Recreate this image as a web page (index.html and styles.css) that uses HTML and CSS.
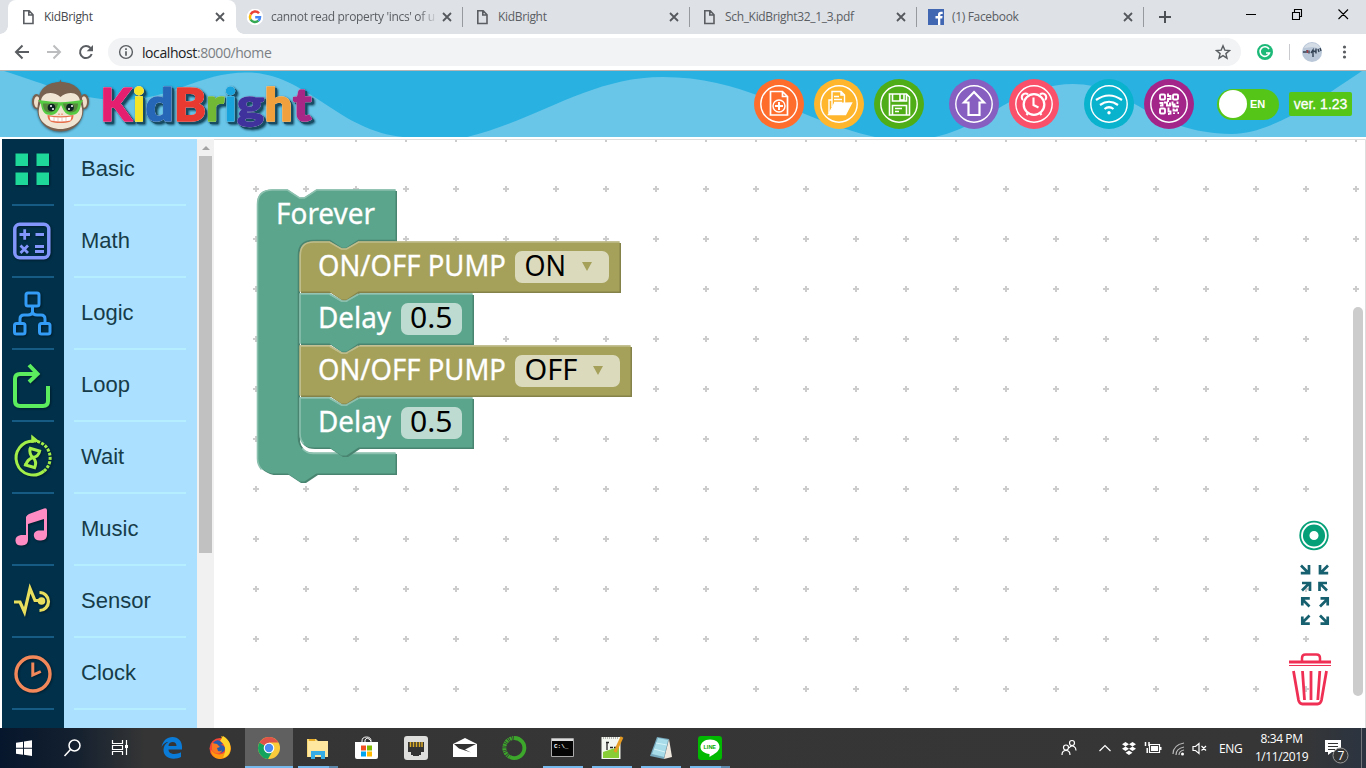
FILE: index.html
```html
<!DOCTYPE html>
<html lang="en">
<head>
<meta charset="utf-8">
<title>KidBright</title>
<link rel="stylesheet" href="styles.css">
</head>
<body>
<svg class="defs" width="0" height="0">
  <symbol id="doc" viewBox="0 0 16 16"><path d="M3.8 1.8h5.4l3.8 4v8.7H3.8z M8.8 2v4h4" fill="none" stroke="#5a5d61" stroke-width="1.6"/></symbol>
  <symbol id="x" viewBox="0 0 16 16"><path d="M4 4l8 8M12 4l-8 8" stroke="#55585c" stroke-width="1.8"/></symbol>
</svg>

<div class="tabs">
  <div class="tab active"><svg class="fav"><use href="#doc"/></svg><span class="title">KidBright</span><svg class="fav"><use href="#x"/></svg></div>
  <div class="tab"><svg class="fav" viewBox="0 0 16 16"><circle cx="8" cy="8" r="8.3" fill="#fff"/><g fill="none" stroke-width="2.5"><path d="M12 4.3A5 5 0 0 0 3.6 5.5" stroke="#ea4335"/><path d="M3.6 5.5a5 5 0 0 0 0 5" stroke="#fbbc05"/><path d="M3.6 10.5a5 5 0 0 0 7.8 1.2" stroke="#34a853"/><path d="M11.4 11.7A5 5 0 0 0 13 8.2H8.2" stroke="#4285f4"/></g></svg><span class="title fade">cannot read property 'incs' of u</span><svg class="fav"><use href="#x"/></svg></div>
  <div class="tab line"><svg class="fav"><use href="#doc"/></svg><span class="title">KidBright</span><svg class="fav"><use href="#x"/></svg></div>
  <div class="tab line"><svg class="fav"><use href="#doc"/></svg><span class="title">Sch_KidBright32_1_3.pdf</span><svg class="fav"><use href="#x"/></svg></div>
  <div class="tab line"><svg class="fav" viewBox="0 0 16 16"><path d="M0 0h16v16H0z" fill="#4267b2"/><path d="M10 16V9.5H7.5V7H10V5.5Q10 2.8 13 2.8h1.7V5h-1.2q-1.2 0-1.2 1.1V7h2.3l-.4 2.5h-1.9V16z" fill="#fff"/></svg><span class="title">(1) Facebook</span><svg class="fav"><use href="#x"/></svg></div>
  <div class="newtab"><svg width="44" height="34"><path d="M16 17h12M22 11v12" stroke="#4d5054" stroke-width="2"/></svg></div>
  <svg class="wincontrols" width="138" height="34" viewBox="1228 0 138 34"><path d="M1246 14.500h10M1292.500 12.500h7v7h-7zM1294.500 12v-2.500h7v7H1300M1338.500 9.500l9.500 9.500M1348 9.500l-9.500 9.500" fill="none" stroke="#000" stroke-width="1.1"/></svg>
</div>

<div class="toolbar">
  <svg class="nav" width="108" height="36" viewBox="0 34 108 36"><g fill="none" stroke-width="2"><path d="M29 52H16.500M22.500 45.500L16 52l6.500 6.500" stroke="#5a5d61"/><path d="M47 52h12.500M53.500 45.500L60 52l-6.500 6.500" stroke="#bbbdbf"/><path d="M90.500 48A6 6 0 1 0 91.700 54" stroke="#5a5d61"/></g><path d="M93 45v6.300h-6.300z" fill="#5a5d61"/></svg>
  <div class="omnibox">
    <svg width="16" height="16"><circle cx="8" cy="8" r="6.400" fill="none" stroke="#5a5d61" stroke-width="1.400"/><path d="M8 4.200v1.700M8 7.200v4.500" stroke="#5a5d61" stroke-width="1.700"/></svg>
    <span class="url">localhost<i>:8000/home</i></span>
    <svg class="star" width="16" height="16"><path d="M8 1.800l1.800 4.300 4.700.4-3.600 3.100 1.100 4.600L8 11.700l-4 2.500 1.100-4.600-3.600-3.100 4.700-.4z" fill="none" stroke="#5a5d61" stroke-width="1.400"/></svg>
  </div>
  <svg width="125" height="36" viewBox="1241 34 125 36"><circle cx="1265" cy="52" r="8" fill="#1cb978"/><path d="M1269 49a4.800 4.800 0 1 0 .5 4h-3.500" fill="none" stroke="#fff" stroke-width="1.600"/><path d="M1289.500 44v16" stroke="#c8cacd"/><circle cx="1312" cy="52" r="10" fill="#b9c7d8"/><path d="M1304 48q3-5 8-5 6 0 9 6l-8-2z" fill="#d4dce6"/><path d="M1303 52h3M1307 50v3M1309 50.500v3M1311 53l2-3v7M1313.500 51l3 1M1316 48.500v5M1318 49l1 3M1320 48l1 3" stroke="#344255" stroke-width="1.400" fill="none"/><path d="M1307.500 50v3" stroke="#a13f44" stroke-width="1.500"/><g fill="#5a5d61"><circle cx="1344.500" cy="47" r="1.600"/><circle cx="1344.500" cy="52" r="1.600"/><circle cx="1344.500" cy="57" r="1.600"/></g></svg>
</div>

<header class="header">
  <svg class="waves" width="1366" height="66"><path d="M4 0C46 13 78 28 115 29C170 31 196 1.500 247 1.500C306 1.500 338 60 403 66H0V0zM467 66C540 48 590 6 663 6C748 6 800 50 875 66zM935 66C985 56 1016 13 1073 13C1130 13 1150 62 1232 63C1272 63 1320 28 1362 0h4v66z" fill="#69c6e9"/></svg>
  <svg class="logo" width="300" height="66" viewBox="26 71 300 66">
    <g class="monkey">
      <path d="M59 83l1.500-3.500 1 3" fill="#79614f"/>
      <ellipse cx="36.500" cy="101.500" rx="4.500" ry="7.500" fill="#79614f"/><ellipse cx="84.500" cy="101.500" rx="4.500" ry="7.500" fill="#79614f"/>
      <ellipse cx="37" cy="102" rx="3" ry="5.800" fill="#f0dfca"/><ellipse cx="84" cy="102" rx="3" ry="5.800" fill="#f0dfca"/>
      <path d="M39 99C39 88 49 82 60.500 82S82 88 82 99C88 119 75 131.500 60.500 131.500S33 119 39 99z" fill="#79614f"/>
      <path d="M60.500 97C54 91 41 91 41 102C33 120 48 129 60.500 129S88 120 80 102C80 91 67 91 60.500 97z" fill="#f0e4d3"/>
      <path d="M38 100l12 1.500q10 1.500 21 0L83 100l-2 4c-1 8-4 11-10 11-6 0-8-6-10-10-2 4-4 10-10 10-6 0-9-3-10-11z" fill="#55ca43"/>
      <path d="M43 103.500h15c-1 5-4 9-8 9-5 0-7-4-7-9zM63 103.500h15c0 5-2 9-7 9-4 0-7-4-8-9z" fill="#56883e"/>
      <circle cx="51.500" cy="107.500" r="3.800" fill="#102323"/><circle cx="70" cy="107.500" r="3.800" fill="#102323"/><path d="M51 105v2M53 108v2M69 108v2M72 105v2" stroke="#fff" stroke-width="1.500"/>
      <path d="M47.500 115q13 2.500 26 0c0 7-5 8-13 8s-13-1-13-8z" fill="#e66f4c"/><path d="M49.500 116.500q11 2 22 0l-1 4q-10 2-20 0z" fill="#fff"/><path d="M54 117v4M58 117v4M62 117v4M66 117v4" stroke="#dbb3a5" stroke-width=".7"/><path d="M59 113.500v1.500M62 113.500v1.500" stroke="#e66f4c"/>
    </g>
    <g class="wordmark">
      <text x="100.500" y="121" textLength="31.500" lengthAdjust="spacingAndGlyphs" color="#e41f70">K</text>
      <text x="133" y="121" textLength="12" lengthAdjust="spacingAndGlyphs" color="#f4e529">i</text>
      <text x="145.500" y="121" textLength="28" lengthAdjust="spacingAndGlyphs" color="#2667b8">d</text>
      <text x="174" y="121" textLength="32" lengthAdjust="spacingAndGlyphs" color="#e83a31">B</text>
      <text x="206" y="121" textLength="18" lengthAdjust="spacingAndGlyphs" color="#72b936">r</text>
      <text x="224.500" y="121" textLength="12" lengthAdjust="spacingAndGlyphs" color="#1aa4dd">i</text>
      <text class="g" x="237" y="119" textLength="27" lengthAdjust="spacingAndGlyphs" color="#40329d">g</text>
      <text x="264.500" y="121" textLength="28" lengthAdjust="spacingAndGlyphs" color="#f0a13d">h</text>
      <text x="293" y="121" textLength="18.500" lengthAdjust="spacingAndGlyphs" color="#a72787">t</text>
    </g>
  </svg>
  <div class="actions">
    <div class="btn orange"><svg viewBox="0 0 50 50"><circle cx="25" cy="25" r="18.200"/><path d="M16.500 12.500h12l5 5v18.500h-17zM28.500 12.500v5h5" stroke-width="1.700"/><circle cx="25" cy="27" r="6"/><path d="M21 27h8M25 23v8" stroke-width="2"/></svg></div>
    <div class="btn yellow"><svg viewBox="0 0 50 50"><circle cx="25" cy="25" r="18.200"/><path d="M15 34V21h3M18 28V12.500h9l3.500 3.500v9M27 12.500V16h4M20 17.500h5M20 20.500h8M20 23.500h8"/><path d="M14.500 35.500l6-11 17-.500-6 11.500z" fill="#fff"/></svg></div>
    <div class="btn green"><svg viewBox="0 0 50 50"><circle cx="25" cy="25" r="18.200"/><path d="M15.500 15h17l3 3v18h-20zM18.500 15v7h14v-7M26 15v6h4v-6M18.500 36v-9.500h14V36M21 29.500h7M21 32.500h4" stroke-width="1.600"/></svg></div>
    <div class="btn purple gap"><svg viewBox="0 0 50 50"><circle cx="25" cy="25" r="18.200"/><path d="M25 13L35 23.500h-4.500V36h-11V23.500H15z" stroke-width="2.200"/></svg></div>
    <div class="btn red"><svg viewBox="0 0 50 50"><circle cx="25" cy="25" r="18.200"/><circle cx="25" cy="25.500" r="10.300" stroke-width="2.300"/><path d="M14 21a3.500 3.500 0 1 1 5-5.500M36 21a3.500 3.500 0 1 0-5-5.500M24.500 18.500V26l5 2.500M19 34l-1.500 2M31 34l1.500 2" stroke-width="2.100"/></svg></div>
    <div class="btn teal gap"><svg viewBox="0 0 50 50"><circle cx="25" cy="25" r="18.200"/><path d="M12 21q13-9 26 0M16 26q9-6.500 18 0M20.500 30q4.500-3.500 9 0" stroke-width="2.200"/><circle cx="25" cy="33.800" r="1.700" fill="#fff" stroke="none"/></svg></div>
    <div class="btn magenta"><svg viewBox="0 0 50 50"><circle cx="25" cy="25" r="18.200"/><g stroke-width="1.900"><rect x="16" y="15.500" width="5" height="5" rx="1"/><rect x="29" y="15.500" width="5" height="5" rx="1"/><rect x="16" y="29.500" width="5" height="5" rx="1"/><path d="M24 14.500v2.500h2.500v3h-2.500v3M15.500 24h3v2.500h-2.500M20 23.500h3v3h3V23.500M28.500 22.500v3h3M33.500 22.500v2.500M28.500 27.500h6.500M24.500 28.500v4h2v3M29.500 29.500v2h3.500v-2M30 35v-1.500M24 35h1.500M33.500 34h1.500"/></g></svg></div>
    <div class="toggle"><span class="knob"></span>EN</div>
    <div class="version">ver. 1.23</div>
  </div>
</header>

<main class="main">
  <nav class="side">
    <div class="cat"><div class="icon"><svg viewBox="0 0 62 72"><path d="M13.500 20.500H26V33H13.500zM34.500 20.500H47V33H34.500zM13.500 39.500H26V52H13.500zM34.500 39.500H47V52H34.500z" fill="#1dd899"/></svg></div><div class="label">Basic</div></div>
    <div class="cat"><div class="icon"><svg viewBox="0 0 62 72" stroke="#8296fc" stroke-width="3.500"><rect x="12.800" y="19.300" width="34" height="33.500" rx="5"/><path d="M17.500 29.500h10.500M22.700 24.300v10.500M33.500 29.500h8.500M18.500 40.500l7.500 7.500M26 40.500l-7.500 7.500M33 41.500h9M33 46.500h9" stroke-width="2.800"/></svg></div><div class="label">Math</div></div>
    <div class="cat"><div class="icon"><svg viewBox="0 0 62 72" stroke="#339cf6" stroke-width="3"><rect x="24" y="16" width="13" height="13" rx="2"/><rect x="12.500" y="46.500" width="10.500" height="10.500" rx="2"/><rect x="37.500" y="46.500" width="10.500" height="10.500" rx="2"/><path d="M30.500 29v9M18 46v-4q0-4 4-4h4q4 0 4.500-3q.5 3 4.500 3h4q4 0 4 4v4"/></svg></div><div class="label">Logic</div></div>
    <div class="cat"><div class="icon"><svg viewBox="0 0 62 72" stroke="#5ced5e" stroke-width="4"><path d="M35 25H18q-5 0-5 5v22q0 5 5 5h23q5 0 5-5V37M27 16l8.500 9-8.500 8"/></svg></div><div class="label">Loop</div></div>
    <div class="cat"><div class="icon"><svg viewBox="0 0 62 72" stroke="#a3ef49" stroke-width="3"><path d="M32 20A17 17 0 1 0 42 50"/><path d="M42 50A17 17 0 0 0 33 20" stroke-dasharray="3 1.300"/><path d="M30 15l6 5-6 1z" fill="#a3ef49" stroke-width="1.500"/><path d="M27 27l12 3.500M22 43.500l12 3.500M28 27.500q-1 6 3 9q-6 2-7 7.500M37.500 30.500q-1 5-6.500 6q4 4 2 9.500" stroke-width="3"/></svg></div><div class="label">Wait</div></div>
    <div class="cat"><div class="icon"><svg viewBox="0 0 62 72"><path d="M24 24q1-2 3-3l15-5.500q3-1 3 2V42q0 5-6 5.500t-7-4 4-6h6V26l-16 5v16q0 5-6 5.500t-6.500-4.500 5.500-6h5z" fill="#ff8dc3"/></svg></div><div class="label">Music</div></div>
    <div class="cat"><div class="icon"><svg viewBox="0 0 62 72" stroke="#e9df5e" stroke-width="3.200"><path d="M12 37h6l4.500 10L28 23.500l5 12h6M37.500 27.500a9 9 0 1 1 0 18"/><circle cx="39.500" cy="36" r="2.200" fill="#e9df5e"/></svg></div><div class="label">Sensor</div></div>
    <div class="cat"><div class="icon"><svg viewBox="0 0 62 72" stroke="#f3895b" stroke-width="3.400"><circle cx="31" cy="37" r="17"/><path d="M30.800 25.500V38l8-3.500" stroke-width="3"/></svg></div><div class="label">Clock</div></div>
    <div class="cat"><div class="icon"></div><div class="label"></div></div>
  </nav>
  <div class="scroll"><span class="up"></span><div class="thumb"></div></div>

  <svg class="workspace" width="1152" height="589" viewBox="214 139 1152 589">
    <defs>
      <pattern id="grid" x="231" y="164" width="50" height="50" patternUnits="userSpaceOnUse"><path d="M22 25h6M25 22v6" stroke="#ccc" stroke-width="2"/></pattern>
      <path id="forever" d="M257.500 205Q257.500 190 272.500 190H288l12 8h5l12-8H396v51H359l-12 8h-5l-12-8H314Q299 241 299 256V438Q299 453 314 453H396v21H317l-12 8h-5l-12-8H272.500Q257.500 470 257.500 459z"/>
      <path id="pump1" d="M300 256Q300 242 314 242H330l12 7h5l12-7H620v50H359l-12 8h-5l-12-8H300z"/>
      <path id="delay1" d="M300 294H330l12 7h5l12-7H473v50H359l-12 8h-5l-12-8H300z"/>
      <path id="pump2" d="M300 346H330l12 7h5l12-7H631v50H359l-12 8h-5l-12-8H300z"/>
      <path id="delay2" d="M300 398H330l12 7h5l12-7H473v50H359l-12 8h-5l-12-8H314Q300 448 300 434z"/>
    </defs>
    <path d="M214 139h1152v589H214z" fill="url(#grid)"/>
    <path d="M214 139.500h1151.500V728" fill="none" stroke="#ddd"/>
    <g transform="translate(-0.500 -0.500)">
      <g class="teal-dark"><use href="#forever" x="1.500" y="1.500"/></g>
      <use class="teal-base" href="#forever"/>
      <path class="dark-line" d="M330 241l12 8h5l12-8H396M330 241H314Q299 241 299 256V438Q299 444 303 449"/>
      <path class="teal-light" d="M262 470Q258 465 258 459V205Q258 190.500 273 190.500H288l12 8h5l12-8H396M303 449Q307 454 314 454H396"/>

      <g class="teal-dark"><use href="#delay2" x="1.500" y="1.500"/></g><use class="teal-base" href="#delay2"/>
      <path class="teal-light" d="M304 444Q300.500 440 300.500 434V398.500H330l12 7h5l12-7H473"/>
      <g class="olive-dark"><use href="#pump2" x="1.500" y="1.500"/></g><use class="olive-base" href="#pump2"/>
      <path class="olive-light" d="M300.700 396V346.500H330l12 7h5l12-7H631"/>
      <path class="teal-light" d="M330 398.500l12 7h5l12-7"/>
      <g class="teal-dark"><use href="#delay1" x="1.500" y="1.500"/></g><use class="teal-base" href="#delay1"/>
      <path class="teal-light" d="M300.500 344V294.500H330l12 7h5l12-7H473"/>
      <path class="olive-light" d="M330 346.500l12 7h5l12-7"/>
      <g class="olive-dark"><use href="#pump1" x="1.500" y="1.500"/></g><use class="olive-base" href="#pump1"/>
      <path class="olive-light" d="M300.700 292V256Q300.700 242.500 314 242.500H330l12 7h5l12-7H620"/>
      <path class="teal-light" d="M330 294.500l12 7h5l12-7"/>
    </g>

    <rect x="515" y="251" width="94" height="32" rx="7" fill="#dbdabd"/><rect x="515" y="355" width="105" height="32" rx="7" fill="#dbdabd"/>
    <rect x="401" y="303" width="61" height="32" rx="7" fill="#bddbd1"/><rect x="401" y="407" width="61" height="32" rx="7" fill="#bddbd1"/>
    <path d="M582 262h10l-5 9zM593 366h10l-5 9z" fill="#a5a15b"/>
    <g class="blocktext">
      <text x="276" y="224" textLength="99" lengthAdjust="spacingAndGlyphs">Forever</text>
      <text x="318" y="276" textLength="188" lengthAdjust="spacingAndGlyphs">ON/OFF PUMP</text><text x="318" y="380" textLength="188" lengthAdjust="spacingAndGlyphs">ON/OFF PUMP</text>
      <text x="318" y="328" textLength="73" lengthAdjust="spacingAndGlyphs">Delay</text><text x="318" y="432" textLength="73" lengthAdjust="spacingAndGlyphs">Delay</text>
      <g class="value"><text x="524.500" y="276" textLength="41.500" lengthAdjust="spacingAndGlyphs">ON</text><text x="524.500" y="380" textLength="53" lengthAdjust="spacingAndGlyphs">OFF</text><text x="410" y="328" textLength="42.500" lengthAdjust="spacingAndGlyphs">0.5</text><text x="410" y="432" textLength="42.500" lengthAdjust="spacingAndGlyphs">0.5</text></g>
    </g>

    <circle cx="1314" cy="535.500" r="13.800" fill="#fff" stroke="#05a078" stroke-width="1.800"/><circle cx="1314" cy="535.500" r="7.800" fill="#fff" stroke="#05a078" stroke-width="6.500"/>
    <g fill="none" stroke="#17606f" stroke-width="2.700" transform="translate(0 -0.500)"><path d="M1301 566l7 7M1309 565.500v8.200h-8.200M1328 566l-7 7M1320 565.500v8.200h8.200M1302 591l7-7M1302 583.500h8v8M1327 591l-7-7M1327 583.500h-7.500v8M1309.500 607l-7-7M1302.300 606v-7.200h7.500M1320 607l7-7M1320.500 598.800h7.200v7.200M1309.500 616l-7 7M1302.300 617v7.200h7.500M1320 616l7 7M1320.500 624.200h7.200V617"/></g>
    <g fill="none" stroke="#ef3054"><path d="M1302 661v-3q0-3.500 3.500-3.500h11q3.500 0 3.500 3.500v3" stroke-width="2.500"/><path d="M1289 662h42" stroke-width="2.800"/><path d="M1289 665.500h42" stroke-width="1.200"/><path d="M1293.500 671l5 29q.8 4 4 4h15q3.200 0 4-4l5-29M1302.500 671l2 29M1311 671v29M1319.800 671l-2 29" stroke-width="2.800"/></g>
    <rect x="1353" y="307" width="10" height="389" rx="5" fill="#ccc"/>
  </svg>
</main>

<footer class="taskbar">
  <div class="sys"><svg viewBox="0 0 48 40"><path d="M16 14.700l7-1v6H16zM24 13.500l8-1.200v7.400h-8zM16 20.700h7v6l-7-1zM24 20.700h8V28l-8-1.200z" fill="#fff"/></svg></div>
  <div class="sys"><svg viewBox="0 0 48 40"><g fill="none" stroke="#fff" stroke-width="1.500"><circle cx="26.500" cy="17.500" r="5.500"/><path d="M22.500 21.500L16.500 28"/></g></svg></div>
  <div class="sys"><svg viewBox="0 0 48 40"><path d="M16.500 12v3.500h10V12M16.500 27v-3.500h10V27M16.500 17.500h10v4h-10zM30.500 12v15" fill="none" stroke="#fff" stroke-width="1.200"/><path d="M29 17h3v3h-3z" fill="#fff"/></svg></div>
  <div class="apps">
    <div class="app"><svg viewBox="0 0 48 40"><path d="M14.500 19C16 12.500 20 9 25.500 9c6 0 9.500 4.500 9.500 9.500v3H21.500c0 3 2.500 4.500 6 4.500 2.500 0 4.500-.7 6.500-1.700V29c-2 1.200-4.500 1.700-7.500 1.700-6 0-10-3.500-10-9 0-3.500 2-6.500 5-8-4 .8-5.500 3-7 5.300zM21.500 18h8c0-2.500-1.500-4-3.800-4s-4.200 1.500-4.200 4z" fill="#0b7bd8"/></svg></div>
    <div class="app"><svg viewBox="0 0 48 40"><circle cx="24" cy="20.500" r="10.500" fill="#f44537"/><path d="M25 8c5 2 10 6 10 13-1 8-7 10-12 10-5-1-8-4-8-9 3 4 8 6 13 3 5-4 2-10-1-12z" fill="#fd980f"/><path d="M27 8c7 4 8 9 7 15-1 4-4 6-7 7 4-8 2-14-3-17z" fill="#ffd32a"/><path d="M17 15q3-4 7-2l3 3-3 1q5 0 5 4c-1 5-8 5-11 0z" fill="#275bab"/><path d="M16 15l5 1 3 3-3 1 1 3q3 1 4-1c0 4-8 5-10 0z" fill="#f87921"/></svg></div>
    <div class="app running current"><svg viewBox="0 0 48 40"><circle cx="24" cy="20" r="11" fill="#fccb3c"/><path d="M24 20L14.500 14.500A11 11 0 0 0 23 31l5-8.500z" fill="#14a35f"/><path d="M24 20L14.500 14.500a11 11 0 0 1 19 0H24z" fill="#de5349"/><circle cx="24" cy="20" r="5.300" fill="#fff"/><circle cx="24" cy="20" r="4.200" fill="#4a8af4"/></svg></div>
    <div class="app running multi"><svg viewBox="0 0 48 40"><path d="M13 11h9l2 2h10v16H13z" fill="#f7d675"/><path d="M14 13h20v16H14z" fill="#ffe7a0"/><path d="M17 31v-8h14v8h-4v-4h-6v4z" fill="#37ade8"/><path d="M15 11h6v2h-6z" fill="#e9ad29"/></svg></div>
    <div class="app"><svg viewBox="0 0 48 40"><path d="M12 14h23v15q0 2-2 2H14q-2 0-2-2z" fill="#fff"/><path d="M19 16v-3q0-4 4.500-4t4.500 4v3M22 14v-2q2-4 6 1" stroke="#fff" fill="none"/><path d="M18 17.500h5v5h-5z" fill="#f25022"/><path d="M24 17.500h5v5h-5z" fill="#7fba00"/><path d="M18 23.500h5v5h-5z" fill="#00a4ef"/><path d="M24 23.500h5v5h-5z" fill="#ffb900"/></svg></div>
    <div class="app"><svg viewBox="0 0 48 40"><rect x="12" y="8" width="24" height="24" rx="3" fill="#dededc"/><path d="M16 14h16v10h-3v3h-2v1h-6v-1h-2v-3h-3z" fill="#333"/><path d="M18.500 14v5M21.500 14v5M24.500 14v5M27.500 14v5M30 14v5" stroke="#d9ab27" stroke-width="1.500"/></svg></div>
    <div class="app"><svg viewBox="0 0 48 40"><path d="M12 16l12-6 12 6v13H12z" fill="#fff"/><path d="M13 16h22l-11 5.500 6 3-12-4z" fill="#333"/></svg></div>
    <div class="app"><svg viewBox="0 0 48 40"><path d="M24 10a10 10 0 1 1-4 19" fill="none" stroke="#3da72c" stroke-width="3.800"/><path d="M20 29a10 10 0 0 1 4-19" fill="none" stroke="#3da72c" stroke-width="4" stroke-dasharray="2 .7 1 .7"/></svg></div>
    <div class="app running"><svg viewBox="0 0 48 40"><path d="M12.500 10.500h22v18h-22z" fill="#050505" stroke="#aaa"/><path d="M13 12h21" stroke="#ddd" stroke-width="2"/><text x="15" y="20" class="cmd">C:\_</text></svg></div>
    <div class="app running"><svg viewBox="0 0 48 40"><path d="M13.500 9h19v22h-19z" fill="#f4f7ef"/><path d="M15 24q8-3 16-5v11H15z" fill="#88cc36"/><path d="M15 10h16" stroke="#777" stroke-dasharray="1 1"/><path d="M19 14v8M18 14.500h3M22 19.500h3M26 19.500h3" stroke="#222" stroke-width="1.300"/><path d="M34 9l-7 15" stroke="#e69b22" stroke-width="3"/></svg></div>
    <div class="app running"><svg viewBox="0 0 48 40"><path d="M20 9l12 2-5 20-14-3z" fill="#75a8bd"/><path d="M21 10l10 2-4 17-12-3z" fill="#a8dce8"/><path d="M32 11l3 18-8 2z" fill="#eee8df"/><path d="M17 21l11 3M19 15l11 2" stroke="#d5f4fa"/></svg></div>
    <div class="app running multi"><svg viewBox="0 0 48 40"><rect x="12" y="8" width="24" height="24" rx="3" fill="#00b900"/><path d="M24 11.500c6 0 9.500 3 9.500 7.500 0 4-5 7-10 10v-3c-5-.5-9-3-9-7s4-7.500 9.500-7.500z" fill="#fff"/><text x="17.500" y="21" class="line-label">LINE</text></svg></div>
  </div>
  <div class="tray">
    <svg width="166" height="40" viewBox="1052 728 166 40"><g fill="none" stroke="#fff" stroke-width="1.200"><circle cx="1066" cy="747.500" r="2.500"/><circle cx="1072" cy="743" r="2.500"/><path d="M1062 755q0-4.500 4-4.500t4 4.500M1069 748q2-3 5-1.500 2 1 2 4M1099.500 751l5.500-5.500 5.500 5.500"/><path d="M1149.500 744.500h10v8h-10z"/><path d="M1145.500 742v4M1149 742v4M1147.200 748v5" stroke-width="1.500"/><path d="M1195 746.500h-2v4h2.500l3.500 3v-10l-3.500 3zM1201.500 746l4.500 4.500M1206 746l-4.500 4.500"/><path d="M1173 754q0-9 11-11M1176 755q0-6.500 8-8M1179 755q0-4 5-5" stroke="#bbb"/></g><path d="M1151 746h7v5h-7zM1160 747h1.500v3h-1.500z" fill="#fff"/><circle cx="1182.500" cy="754" r="1.500" fill="#fff"/><path d="M1125.500 742l3.500 2.200-3.500 2.200-3.500-2.200zM1132.500 742l3.500 2.200-3.500 2.200-3.500-2.200zM1125.500 746.500l3.500 2.200-3.500 2.200-3.500-2.200zM1132.500 746.500l3.500 2.200-3.500 2.200-3.500-2.200zM1129 750.500l3.500 2.200-3.500 2.200-3.500-2.200z" fill="#fff"/></svg>
    <span class="lang">ENG</span>
    <div class="clock"><span>8:34 PM</span><span>1/11/2019</span></div>
    <svg width="50" height="40" viewBox="1316 728 50 40"><path d="M1325 740h16v12h-9l-4 3v-3h-3z" fill="#fff"/><path d="M1328 743.500h10M1328 746.500h10M1328 749.500h7" stroke="#333"/><circle cx="1340.500" cy="755.500" r="7.500" fill="#353535" stroke="#999"/><text x="1337.500" y="760" class="badge">7</text><path d="M1361.500 728v40" stroke="#73767a"/></svg>
  </div>
</footer>
</body>
</html>
```

FILE: styles.css
```css
* { box-sizing: border-box; }
body { margin: 0; width: 1366px; height: 768px; overflow: hidden; display: flex; flex-direction: column; background: #fff; font-family: "Open Sans", "Noto Sans", sans-serif; font-size: 12px; }
svg { display: block; flex: none; }
.defs { position: absolute; }

.tabs { height: 34px; flex: none; display: flex; background: #dee1e6; padding-left: 8px; }
.tab { width: 227px; height: 34px; padding: 0 7px 0 12px; display: flex; align-items: center; color: #5a5e63; position: relative; }
.tab.active { background: #fff; border-radius: 8px 8px 0 0; color: #46494d; width: 228px; margin-right: -1px; padding-right: 8px; }
.tab.active::before, .tab.active::after { content: ""; position: absolute; bottom: 0; width: 8px; height: 8px; }
.tab.active::before { left: -8px; background: radial-gradient(circle at 0 0, transparent 7.5px, #fff 8px); }
.tab.active::after { right: -8px; background: radial-gradient(circle at 100% 0, transparent 7.5px, #fff 8px); }
.tab.line::before, .newtab::before { content: ""; position: absolute; left: 0; top: 7px; width: 1px; height: 20px; background: #96999e; }
.fav { width: 16px; height: 16px; flex: none; }
.title { flex: 1; min-width: 0; margin: 0 4px 0 8px; white-space: nowrap; letter-spacing: -0.33px; line-height: 18px; }
.title.fade { margin-right: 0; letter-spacing: -0.33px; -webkit-mask-image: linear-gradient(90deg, #000 148px, transparent 167px); mask-image: linear-gradient(90deg, #000 148px, transparent 167px); }
.newtab { width: 44px; position: relative; }
.wincontrols { margin-left: auto; }

.toolbar { height: 37px; flex: none; display: flex; border-bottom: 1px solid #b5b5b5; background: #fff; }
.omnibox { width: 1133px; height: 28px; margin-top: 4px; border-radius: 14px; background: #f1f3f4; display: flex; align-items: center; padding: 0 10px; }
.url { margin-left: 8px; font-size: 14px; color: #202124; letter-spacing: -0.42px; }
.url i { font-style: normal; color: #7b7f84; }
.star { margin-left: auto; }

.header { height: 66px; flex: none; background: #29b1e1; display: flex; position: relative; }
.waves { position: absolute; left: 0; top: 0; }
.logo { margin-left: 26px; position: relative; }
.monkey { filter: drop-shadow(0 1px 1px #0007); }
.wordmark { font: 900 45px Lato, "Open Sans", sans-serif; filter: drop-shadow(0 0 0.6px #fff) drop-shadow(2px 2px 0 #174c63) drop-shadow(1px 1px 1px #174c63); }
.wordmark text { fill: currentColor; stroke: currentColor; stroke-width: 1.6px; stroke-linejoin: round; }
.wordmark .g { font-size: 41px; }
.actions { margin-left: 428px; display: flex; gap: 10px; align-items: center; position: relative; }
.btn { width: 50px; height: 50px; border-radius: 50%; }
.btn svg { width: 50px; height: 50px; fill: none; stroke: #fff; stroke-width: 1.4; }
.btn.gap { margin-left: 15px; }
.orange { background: #ff6d2d; }
.yellow { background: #ffb62d; }
.green { background: #4fae18; }
.purple { background: #865fc1; }
.red { background: #fb5069; }
.teal { background: #09b2cd; }
.magenta { background: #a4258a; }
.toggle { width: 62px; height: 31px; margin-left: 13px; border-radius: 16px; background: #55c618; display: flex; align-items: center; padding-left: 2px; gap: 3px; color: #fff; font: bold 11px "Liberation Sans", sans-serif; }
.knob { width: 28px; height: 28px; border-radius: 50%; background: #fff; }
.version { width: 63px; height: 24px; margin-top: -1px; border-radius: 2px; background: #55c618; color: #fff; font: 14px/24px "Liberation Sans", sans-serif; text-align: center; -webkit-text-stroke: 0.3px #fff; }

.main { height: 589px; flex: none; margin: 2px 0 0 2px; display: flex; }
.side { width: 195px; overflow: hidden; background: linear-gradient(90deg, #00304a 62px, #abe1ff 62px); }
.cat { height: 72px; display: flex; }
.cat:first-child { margin-top: -5px; }
.icon { width: 62px; position: relative; }
.icon svg { width: 62px; height: 72px; margin: -1px 0 0 -0.5px; fill: none; filter: drop-shadow(1px 1px 1px #0006); }
.label { flex: 1; padding-left: 17px; font: 22px/70px "Liberation Sans", sans-serif; color: #173c49; position: relative; }
.icon::after, .label::after { content: ""; position: absolute; left: 10px; bottom: 0; height: 2px; width: 42px; background: #155b83; }
.label::after { width: 112px; background: #b5efff; }
.scroll { width: 17px; background: #f1f1f1; padding: 7px 2px 0; }
.up { display: block; width: 0; margin-left: 3px; border: 4px solid transparent; border-top: 0; border-bottom-color: #a3a3a3; }
.thumb { width: 13px; height: 397px; margin-top: 6px; background: #c1c1c1; }
.teal-base { fill: #5ba58c; }
.teal-dark { fill: #498470; }
.olive-base { fill: #a5a15b; }
.olive-dark { fill: #848149; }
.teal-light, .olive-light, .dark-line { fill: none; stroke-width: 1.6; stroke: #8cc0af; }
.olive-light { stroke: #c0bd8c; }
.dark-line { stroke: #498470; }
.blocktext { font: 29px "Noto Sans", "Open Sans", sans-serif; fill: #fff; stroke: #fff; stroke-width: 0.3px; }
.blocktext .value { fill: #000; stroke: none; }

.taskbar { height: 40px; flex: none; display: flex; background: linear-gradient(90deg, #06162c 0, #14202f 75px, #353535 145px, #363636 1300px, #2b3441 1366px); color: #fff; }
.sys, .sys svg { width: 48px; height: 40px; }
.apps { display: flex; gap: 1px; margin-left: 3px; }
.app { width: 48px; height: 40px; position: relative; }
.app svg { width: 48px; height: 40px; }
.running::after { content: ""; position: absolute; left: 4px; bottom: 0; width: 40px; height: 2px; background: #76b9ed; }
.current { background: #606060; }
.current::after { left: 0; width: 48px; }
.multi::after { background: linear-gradient(90deg, #76b9ed 31px, #5b88aa 31px); }
.cmd { font: bold 6px "Liberation Mono", monospace; fill: #fff; }
.line-label { font: bold 5.5px "Liberation Sans", sans-serif; fill: #00a800; }
.tray { margin-left: auto; display: flex; align-items: center; }
.lang { width: 29px; padding-left: 1px; letter-spacing: -0.4px; }
.clock { width: 69px; display: flex; flex-direction: column; align-items: center; line-height: 18px; margin-top: -1px; letter-spacing: -0.4px; }
.badge { font: 12px "Open Sans", sans-serif; fill: #fff; }
```
